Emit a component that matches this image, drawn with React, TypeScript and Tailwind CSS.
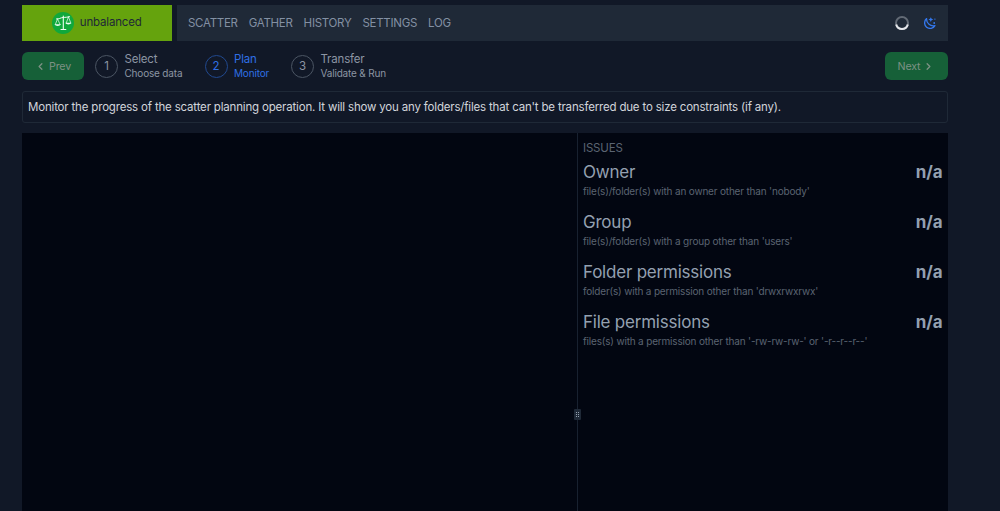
import { LuChevronLeft, LuChevronRight } from "react-icons/lu";

const links = ["SCATTER", "GATHER", "HISTORY", "SETTINGS", "LOG"];

const steps = [
  { id: 1, title: "Select", subtitle: "Choose data", width: "w-[109.500px]" },
  { id: 2, title: "Plan", subtitle: "Monitor", width: "w-[86.500px]" },
  { id: 3, title: "Transfer", subtitle: "Validate & Run", width: "w-[110px]" },
];

const issues = [
  { title: "Owner", text: "file(s)/folder(s) with an owner other than 'nobody'" },
  { title: "Group", text: "file(s)/folder(s) with a group other than 'users'" },
  { title: "Folder permissions", text: "folder(s) with a permission other than 'drwxrwxrwx'" },
  { title: "File permissions", text: "files(s) with a permission other than '-rw-rw-rw-' or '-r--r--r--'" },
];

function Logo() {
  return (
    <svg viewBox="0 0 22 22" className="w-[22px] h-[22px]" fill="none">
      <circle cx="11" cy="11" r="11" fill="#10a83c" />
      <g stroke="#f0fdf4" strokeLinecap="round" strokeLinejoin="round">
        <path d="M11.300 4v13" strokeWidth="1.100" />
        <path d="M4.500 7c2.800.3 3.800-1.300 6.500-1.500s4-.2 6.500-.8" strokeWidth="1" />
        <path d="M9 17.500h4.800" strokeWidth="1.200" />
        <path d="M5.500 7L3.300 12.500M5.500 7l2.600 5.500M16.500 5L14.200 11M16.500 5l2.300 6" strokeWidth=".7" />
      </g>
      <path d="M2.700 12.300h6c-.5 2.300-5.500 2.300-6 0zM13.500 10.800h5.700c-.5 2.200-5.200 2.200-5.700 0z" fill="#f0fdf4" />
    </svg>
  );
}

function Spinner() {
  return (
    <svg viewBox="0 0 14 14" className="w-[14px] h-[14px]" fill="none" strokeWidth="2">
      <circle cx="7" cy="7" r="6" stroke="#626a75" />
      <path d="M1.200 8.500a6 6 0 0 0 11.600 0" stroke="#e5e7eb" />
    </svg>
  );
}

function MoonStars() {
  return (
    <svg viewBox="0 0 12 12" className="w-3 h-3 text-[#3478ee]" fill="currentColor">
      <path
        d="M2.600 1.600C-.2 4 .1 8.200 2.600 10.200c2.700 2.100 6.800 1.300 8.300-1.600C6.500 9.600 2.300 6.600 2.600 1.600z"
        fill="none"
        stroke="currentColor"
        strokeWidth="1.300"
        strokeLinejoin="round"
      />
      <path d="M6.800.2l.8 1.600 1.700.7-1.700.8-.8 1.700-.8-1.700-1.600-.8L6 1.800z" />
      <circle cx="10.900" cy="2.100" r=".7" />
      <circle cx="10.200" cy="6" r=".9" />
    </svg>
  );
}

function Header() {
  return (
    <header className="flex gap-[5px] h-9 shrink-0">
      <div className="flex items-center justify-center gap-[5.500px] w-[150px] bg-[#65a30d] text-[#1f2937] text-[11.500px]">
        <Logo />
        <span>unbalanced</span>
      </div>
      <nav className="flex flex-1 items-center justify-between bg-[#1f2937] pl-[11px] pr-[12.500px]">
        <div className="flex gap-[11px] pt-[2px] text-[11.500px] tracking-[-0.28px] text-[#8390a3]">
          {links.map((link) => (
            <a key={link} href="#">
              {link}
            </a>
          ))}
        </div>
        <div className="flex items-center gap-[14.500px]">
          <Spinner />
          <MoonStars />
        </div>
      </nav>
    </header>
  );
}

function Stepper() {
  return (
    <section className="flex items-center justify-between h-7 mt-[11px] shrink-0">
      <div className="flex items-center">
        <button className="flex items-center justify-center gap-[3px] w-[62px] h-7 mr-[11px] rounded-md bg-[#166038] text-[10.700px] text-[#7d9184]">
          <LuChevronLeft className="w-[11px] h-[11px]" strokeWidth={2.8} />
          <span className="pt-[2px]">Prev</span>
        </button>
        {steps.map((step) => (
          <div
            key={step.id}
            className={`flex items-center gap-[6.500px] ${step.width} ${step.id === 2 ? "text-[#2f6fe4]" : "text-[#8c95a3]"}`}
          >
            <span
              className={`flex items-center justify-center w-[23px] h-[23px] pt-[2px] shrink-0 rounded-full border text-[11.500px] ${step.id === 2 ? "border-[#21498f]" : "border-[#4b5563]"}`}
            >
              {step.id}
            </span>
            <div className="whitespace-nowrap">
              <h2 className="text-[11.500px] leading-[14px]">{step.title}</h2>
              <p className="text-[10px] leading-[14px]">{step.subtitle}</p>
            </div>
          </div>
        ))}
      </div>
      <button className="flex items-center justify-center gap-[3px] w-[63px] h-7 pr-px rounded-md bg-[#166038] text-[10.700px] text-[#7d9184]">
        <span className="pt-[2px]">Next</span>
        <LuChevronRight className="w-[11px] h-[11px]" strokeWidth={2.8} />
      </button>
    </section>
  );
}

function Issues() {
  return (
    <aside className="flex-1 px-[5px] pt-[7px]">
      <h1 className="text-[11.500px] leading-4 text-[#5b6472]">ISSUES</h1>
      {issues.map((issue) => (
        <div key={issue.title} className="h-[50px] pt-1">
          <div className="flex justify-between text-[17px] leading-6 tracking-[-0.22px] text-[#94a0b0]">
            <h2>{issue.title}</h2>
            <span className="font-bold tracking-[-0.1px] pr-[0.500px]">n/a</span>
          </div>
          <p className="text-[10px] leading-[14px] text-[#5b6472]">{issue.text}</p>
        </div>
      ))}
    </aside>
  );
}

function Divider() {
  return (
    <div className="relative w-px bg-[#182130]">
      <div className="absolute -left-[3px] top-[276px] grid grid-cols-[1px_1px] gap-px content-center justify-center w-[7px] h-[11px] rounded-[1px] bg-[#1f2937]">
        {[0, 1, 2, 3, 4, 5].map((dot) => (
          <i key={dot} className="w-px h-px bg-[#94a0b0]" />
        ))}
      </div>
    </div>
  );
}

export default function App() {
  return (
    <main className="flex flex-col h-screen overflow-hidden bg-[#111827] pt-[5px] pl-[22px] pr-[52px] font-['Inter',sans-serif] tracking-[-0.18px]">
      <Header />
      <Stepper />
      <p className="flex items-center h-8 mt-[11px] px-[5px] pt-px shrink-0 rounded-[3px] border border-[#1f2937] text-[11.500px] text-[#d1d5db]">
        Monitor the progress of the scatter planning operation. It will show you any folders/files that can't be
        transferred due to size constraints (if any).
      </p>
      <div className="flex flex-1 mt-[10px] bg-[#020611]">
        <div className="w-[555px]" />
        <Divider />
        <Issues />
      </div>
    </main>
  );
}
